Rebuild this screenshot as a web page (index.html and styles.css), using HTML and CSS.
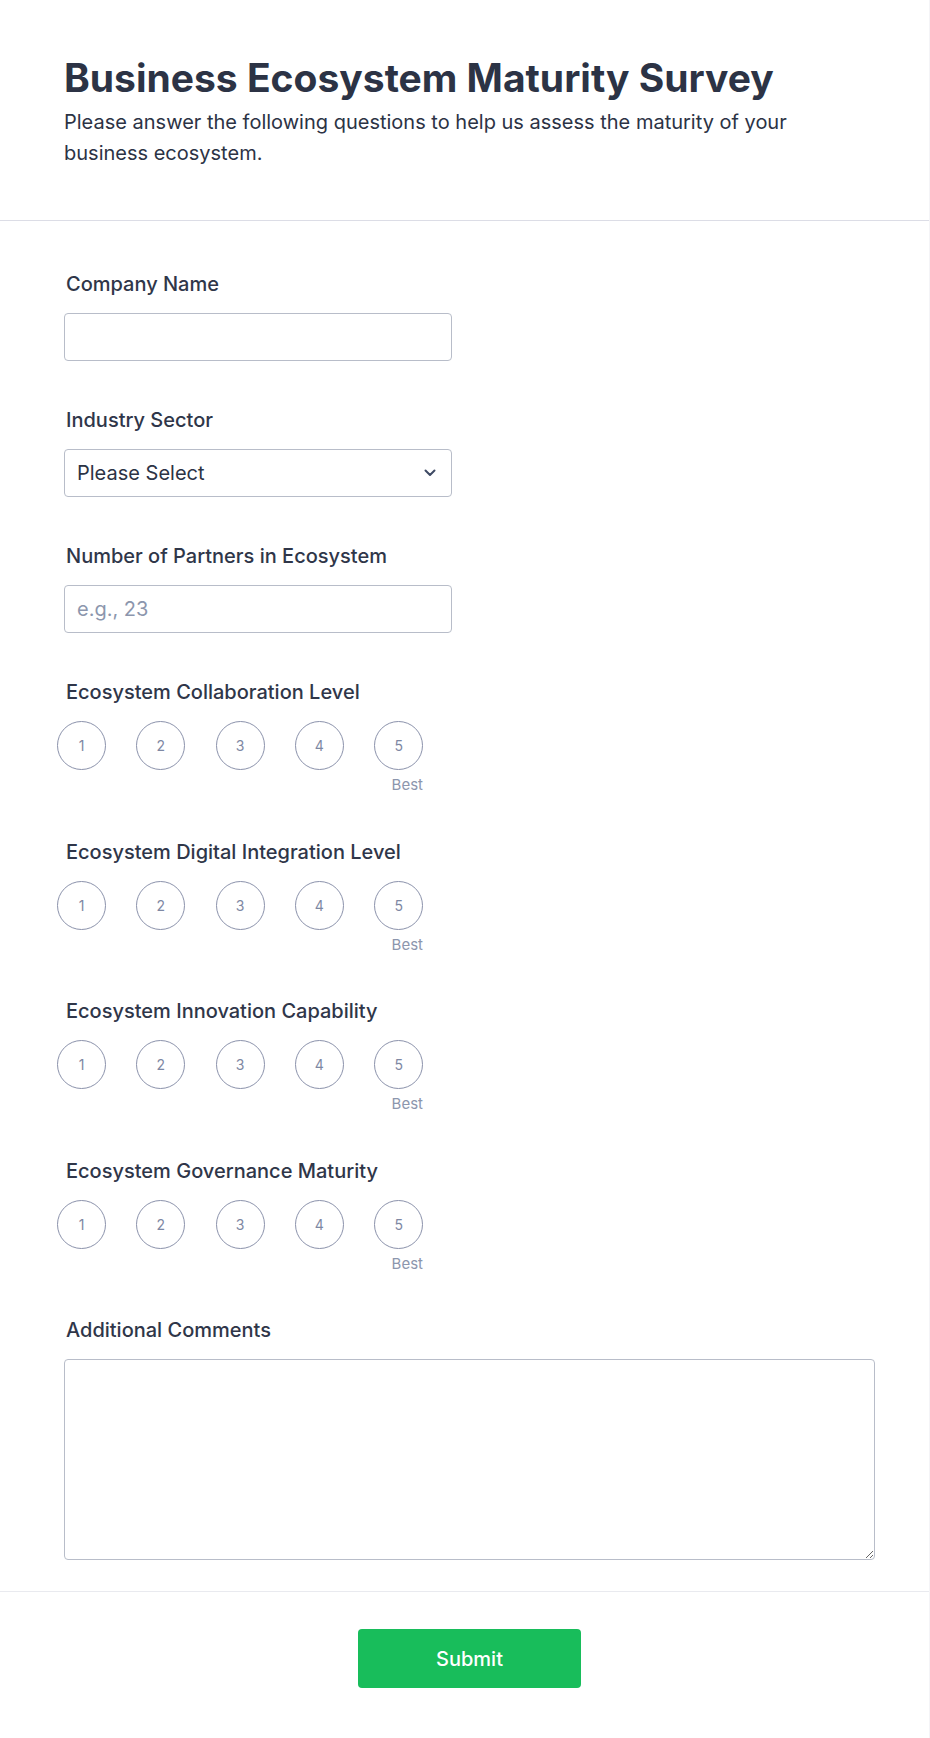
FILE: index.html
```html
<!DOCTYPE html>
<html lang="en">
<head>
<meta charset="utf-8">
<title>Business Ecosystem Maturity Survey</title>
<link rel="stylesheet" href="styles.css">
</head>
<body>
<form class="form">
  <header class="form-header">
    <h1 class="form-title">Business Ecosystem Maturity Survey</h1>
    <p class="form-subtitle">Please answer the following questions to help us assess the maturity of your business ecosystem.</p>
  </header>

  <section class="form-body">
    <div class="field">
      <label class="field-label" for="company">Company Name</label>
      <input class="text-input" id="company" type="text">
    </div>

    <div class="field">
      <label class="field-label" for="sector">Industry Sector</label>
      <div class="select-wrap">
        <select class="text-input select-input" id="sector">
          <option>Please Select</option>
        </select>
        <svg class="select-chevron" width="12" height="8" viewBox="0 0 12 8" aria-hidden="true"><path d="M1.5 1.5 L6 6 L10.5 1.5" fill="none" stroke="#3e4a64" stroke-width="2" stroke-linecap="round" stroke-linejoin="round"/></svg>
      </div>
    </div>

    <div class="field">
      <label class="field-label" for="partners">Number of Partners in Ecosystem</label>
      <input class="text-input" id="partners" type="text" placeholder="e.g., 23">
    </div>

    <div class="field field-rating">
      <div class="field-label">Ecosystem Collaboration Level</div>
      <div class="rating">
        <div class="rating-row">
          <span class="rating-dot">1</span><span class="rating-dot">2</span><span class="rating-dot">3</span><span class="rating-dot">4</span><span class="rating-dot">5</span>
        </div>
        <div class="rating-best">Best</div>
      </div>
    </div>

    <div class="field field-rating">
      <div class="field-label">Ecosystem Digital Integration Level</div>
      <div class="rating">
        <div class="rating-row">
          <span class="rating-dot">1</span><span class="rating-dot">2</span><span class="rating-dot">3</span><span class="rating-dot">4</span><span class="rating-dot">5</span>
        </div>
        <div class="rating-best">Best</div>
      </div>
    </div>

    <div class="field field-rating">
      <div class="field-label">Ecosystem Innovation Capability</div>
      <div class="rating">
        <div class="rating-row">
          <span class="rating-dot">1</span><span class="rating-dot">2</span><span class="rating-dot">3</span><span class="rating-dot">4</span><span class="rating-dot">5</span>
        </div>
        <div class="rating-best">Best</div>
      </div>
    </div>

    <div class="field field-rating">
      <div class="field-label">Ecosystem Governance Maturity</div>
      <div class="rating">
        <div class="rating-row">
          <span class="rating-dot">1</span><span class="rating-dot">2</span><span class="rating-dot">3</span><span class="rating-dot">4</span><span class="rating-dot">5</span>
        </div>
        <div class="rating-best">Best</div>
      </div>
    </div>

    <div class="field field-last">
      <label class="field-label" for="comments">Additional Comments</label>
      <textarea class="text-area" id="comments"></textarea>
    </div>
  </section>

  <footer class="form-footer">
    <button class="submit-btn" type="button">Submit</button>
  </footer>
</form>
</body>
</html>
```

FILE: styles.css
```css
* { box-sizing: border-box; }

html, body {
  margin: 0;
  padding: 0;
  background: #ffffff;
}

body {
  font-family: Inter, "Noto Sans", "Liberation Sans", sans-serif;
  color: #2c3345;
}

.form {
  width: 930px;
  min-height: 1738px;
  border-right: 1px solid #f4f4f7;
  background: #ffffff;
}

.form-header {
  padding: 54px 64px 51px 64px;
  border-bottom: 1px solid #dcdde6;
}

.form-title {
  margin: 0;
  font-size: 39px;
  line-height: 47px;
  font-weight: 700;
  color: #2c3345;
}

.form-subtitle {
  margin: 6px 0 0 0;
  font-size: 20px;
  line-height: 31px;
  font-weight: 400;
  color: #2c3345;
  max-width: 760px;
}

.form-body {
  padding: 51px 55px 0 64px;
}

.field {
  display: flex;
  flex-direction: column;
  margin-bottom: 47px;
}

.field-rating {
  margin-bottom: 45.5px;
}

.field-last {
  margin-bottom: 31px;
}

.field-label {
  display: block;
  font-size: 20px;
  line-height: 24px;
  font-weight: 500;
  color: #2f3649;
  padding-left: 2px;
  margin-bottom: 17px;
}

.text-input {
  width: 388px;
  height: 48px;
  border: 1px solid #b8bdc9;
  border-radius: 4px;
  padding: 0 12px;
  font-family: Inter, "Noto Sans", "Liberation Sans", sans-serif;
  font-size: 20px;
  color: #2c3345;
  background: #ffffff;
  outline: none;
}

.text-input::placeholder {
  color: #8c96ad;
}

.select-wrap {
  position: relative;
  width: 388px;
}

.select-input {
  appearance: none;
  -webkit-appearance: none;
  display: block;
}

.select-chevron {
  position: absolute;
  right: 16px;
  top: 20px;
  pointer-events: none;
}

.rating {
  display: flex;
  flex-direction: column;
  align-items: flex-end;
  width: 366px;
  margin-left: -7px;
}

.rating-row {
  display: flex;
  gap: 30.3px;
  width: 100%;
}

.rating-dot {
  width: 49px;
  height: 49px;
  flex: 0 0 49px;
  border: 1px solid #8b92ab;
  border-radius: 50%;
  display: flex;
  align-items: center;
  justify-content: center;
  font-size: 14px;
  color: #7e88a3;
  background: #ffffff;
}

.rating-best {
  margin-top: 6px;
  font-size: 15px;
  line-height: 18px;
  color: #8c96ad;
}

.text-area {
  width: 811px;
  height: 201px;
  border: 1px solid #b8bdc9;
  border-radius: 4px;
  padding: 10px 12px;
  font-family: Inter, "Noto Sans", "Liberation Sans", sans-serif;
  font-size: 20px;
  color: #2c3345;
  outline: none;
  display: block;
}

.form-footer {
  border-top: 1px solid #e9eaef;
  padding: 37px 54px 40px 64px;
  display: flex;
  justify-content: center;
}

.submit-btn {
  width: 223px;
  height: 59px;
  border: none;
  border-radius: 4px;
  background: #18bd5b;
  color: #ffffff;
  font-family: Inter, "Noto Sans", "Liberation Sans", sans-serif;
  font-size: 20px;
  font-weight: 500;
  cursor: pointer;
}
```
